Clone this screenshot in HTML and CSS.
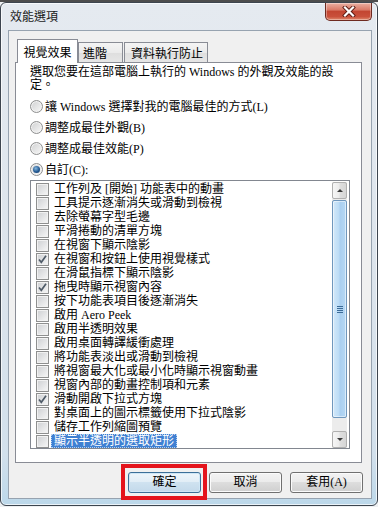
FILE: index.html
```html
<!DOCTYPE html>
<html lang="zh-Hant">
<head>
<meta charset="utf-8">
<title>效能選項</title>
<link rel="stylesheet" href="styles.css">
</head>
<body>
<div class="behind"></div>
<div class="window">
  <div class="titlebar">
    <div class="title">效能選項</div>
    <div class="close">
      <svg width="14" height="11" viewBox="0 0 14 11"><path d="M3 1.5 L11 9.5 M11 1.5 L3 9.5" stroke="#5a1a12" stroke-width="4" stroke-linecap="square" fill="none"/><path d="M3 1.5 L11 9.5 M11 1.5 L3 9.5" stroke="#ffffff" stroke-width="2.2" stroke-linecap="square" fill="none"/></svg>
    </div>
  </div>
  <div class="client">
    <div class="tabs">
      <div class="tab active">視覺效果</div>
      <div class="tab t2">進階</div>
      <div class="tab t3">資料執行防止</div>
    </div>
    <div class="panel">
      <div class="desc">選取您要在這部電腦上執行的 Windows 的外觀及效能的設<br>定。</div>
      <div class="radios">
        <div class="radio"><span class="rb"></span>讓 Windows 選擇對我的電腦最佳的方式(L)</div>
        <div class="radio"><span class="rb"></span>調整成最佳外觀(B)</div>
        <div class="radio"><span class="rb"></span>調整成最佳效能(P)</div>
        <div class="radio"><span class="rb on"></span>自訂(C):</div>
      </div>
      <div class="list">
        <div class="rows">
          <div class="row"><span class="cb"></span>工作列及 [開始] 功能表中的動畫</div>
          <div class="row"><span class="cb"></span>工具提示逐漸消失或滑動到檢視</div>
          <div class="row"><span class="cb"></span>去除螢幕字型毛邊</div>
          <div class="row"><span class="cb"></span>平滑捲動的清單方塊</div>
          <div class="row"><span class="cb"></span>在視窗下顯示陰影</div>
          <div class="row"><span class="cb"><svg width="11" height="11" viewBox="0 0 11 11"><path d="M2 5.5 L4.3 8.3 L9 1.8" stroke="#4f5b68" stroke-width="1.7" fill="none"/></svg></span>在視窗和按鈕上使用視覺樣式</div>
          <div class="row"><span class="cb"></span>在滑鼠指標下顯示陰影</div>
          <div class="row"><span class="cb"><svg width="11" height="11" viewBox="0 0 11 11"><path d="M2 5.5 L4.3 8.3 L9 1.8" stroke="#4f5b68" stroke-width="1.7" fill="none"/></svg></span>拖曳時顯示視窗內容</div>
          <div class="row"><span class="cb"></span>按下功能表項目後逐漸消失</div>
          <div class="row"><span class="cb"></span>啟用 Aero Peek</div>
          <div class="row"><span class="cb"></span>啟用半透明效果</div>
          <div class="row"><span class="cb"></span>啟用桌面轉譯緩衝處理</div>
          <div class="row"><span class="cb"></span>將功能表淡出或滑動到檢視</div>
          <div class="row"><span class="cb"></span>將視窗最大化或最小化時顯示視窗動畫</div>
          <div class="row"><span class="cb"></span>視窗內部的動畫控制項和元素</div>
          <div class="row"><span class="cb"><svg width="11" height="11" viewBox="0 0 11 11"><path d="M2 5.5 L4.3 8.3 L9 1.8" stroke="#4f5b68" stroke-width="1.7" fill="none"/></svg></span>滑動開啟下拉式方塊</div>
          <div class="row"><span class="cb"></span>對桌面上的圖示標籤使用下拉式陰影</div>
          <div class="row"><span class="cb"></span>儲存工作列縮圖預覽</div>
          <div class="row"><span class="cb"></span><span class="sel">顯示半透明的選取矩形</span></div>
        </div>
        <div class="sb">
          <div class="sbbtn"><span class="arr up"></span></div>
          <div class="thumb"><span class="grip"></span></div>
          <div class="track"></div>
          <div class="sbbtn"><span class="arr down"></span></div>
        </div>
      </div>
    </div>
    <div class="buttons">
      <div class="btn default">確定</div>
      <div class="btn">取消</div>
      <div class="btn">套用(A)</div>
    </div>
  </div>
</div>
<div class="mark"></div>
</body>
</html>
```
FILE: styles.css
```css
* { box-sizing: border-box; }
html, body { margin: 0; padding: 0; }
body {
  width: 378px;
  height: 507px;
  overflow: hidden;
  position: relative;
  background: #eef0f2;
  font-family: "Liberation Serif", "Noto Sans CJK TC", serif;
  font-size: 12px;
  color: #000;
}
.behind { height: 2px; background: #4d4d4d; }
.window {
  width: 378px;
  height: 504px;
  border: 1px solid #3d454f;
  border-radius: 6px;
  background: linear-gradient(#e5eaf0, #dce4ec 55%, #d2e0ec 90%, #bcd8ea);
  box-shadow: inset 0 0 0 1px rgba(255,255,255,0.7);
  padding: 0 5px 6px 7px;
  display: flex;
  flex-direction: column;
}
.titlebar { height: 27px; display: flex; align-items: flex-start; flex: none; }
.title {
  margin: 6px 0 0 2px;
  font-family: "Noto Sans CJK TC", sans-serif;
  font-size: 12px;
  line-height: 14px;
  color: #1b1b1b;
}
.close {
  margin-left: auto;
  width: 47px;
  height: 18px;
  border: 1px solid #6e2a20;
  border-top: none;
  border-radius: 0 0 5px 5px;
  background: linear-gradient(#eab0a3, #d97a68 40%, #c34632 50%, #c9503b 80%, #e08a6e);
  box-shadow: inset 0 0 0 1px rgba(255,255,255,0.35);
  display: flex;
  align-items: center;
  justify-content: center;
}
.client {
  height: 469px;
  background: #f0f0f0;
  border: 1px solid #97a3b0;
  display: flex;
  flex-direction: column;
  flex: none;
}
.tabs {
  display: flex;
  align-items: flex-end;
  height: 24px;
  margin: 8px 0 -1px 8px;
  position: relative;
  z-index: 1;
  font-family: "Noto Sans CJK TC", sans-serif;
}
.tab {
  height: 21px;
  border: 1px solid #898c95;
  background: linear-gradient(#f4f4f4, #ebebeb 50%, #dedede 51%, #e6e6e6);
  line-height: 19px;
  font-size: 12px;
  color: #000;
}
.tab.active {
  width: 61px;
  height: 24px;
  border-bottom: none;
  background: #fff;
  text-align: center;
  line-height: 23px;
}
.tab.t2 { width: 45px; padding-left: 4px; }
.tab.t3 { width: 84px; padding-left: 6px; margin-left: 1px; }
.panel {
  margin-left: 6px;
  width: 347px;
  height: 401px;
  border: 1px solid #898c95;
  background: #fff;
  padding: 3px 0 0 14px;
  flex: none;
}
.desc { line-height: 13px; white-space: nowrap; }
.radios { margin-top: 4px; }
.radio { height: 21px; display: flex; align-items: center; white-space: nowrap; line-height: 14px; }
.rb {
  width: 13px;
  height: 13px;
  border-radius: 50%;
  border: 1px solid #8e8f8f;
  background: linear-gradient(135deg, #cfd0d1, #f8f8f8);
  box-shadow: inset 0 0 0 1px #f3f3f3;
  margin-right: 2px;
  flex: none;
  display: flex;
  align-items: center;
  justify-content: center;
}
.rb.on::after {
  content: "";
  width: 7px;
  height: 7px;
  border-radius: 50%;
  background: radial-gradient(circle at 40% 35%, #86b8e0, #245a92 55%, #0e3262);
}
.list {
  width: 320px;
  height: 269px;
  border: 1px solid #828790;
  padding: 1px 2px 0 1px;
  display: flex;
}
.rows { flex: 1; }
.row {
  height: 14px;
  display: flex;
  align-items: center;
  padding-left: 4px;
  white-space: nowrap;
  line-height: 14px;
}
.cb {
  width: 13px;
  height: 13px;
  border: 1px solid #8e8f8f;
  background: linear-gradient(135deg, #cdcfd2, #f7f7f7);
  box-shadow: inset 0 0 0 1px #f1f1f1;
  margin-right: 5px;
  flex: none;
  display: flex;
  align-items: center;
  justify-content: center;
}
.sel {
  background: #3f80d2;
  color: #fff;
  height: 14px;
  margin-left: -3px;
  padding: 0 3px;
  outline: 1px dotted #b9d2f0;
  outline-offset: -1px;
}
.sb {
  width: 15px;
  display: flex;
  flex-direction: column;
  background: #ececec;
  height: 266px;
}
.sbbtn {
  height: 17px;
  border: 1px solid #b0b0b0;
  border-radius: 2px;
  background: linear-gradient(90deg, #f6f6f6, #ececec 45%, #dedede 55%, #d6d6d6);
  display: flex;
  align-items: center;
  justify-content: center;
  flex: none;
}
.arr { width: 0; height: 0; border-left: 3px solid transparent; border-right: 3px solid transparent; }
.arr.up { border-bottom: 3px solid #3a3a3a; }
.arr.down { border-top: 3px solid #3a3a3a; }
.thumb {
  margin-top: 1px;
  height: 218px;
  border: 1px solid #6f97bd;
  border-radius: 2px;
  background: linear-gradient(90deg, #d2e8f9, #bcdcf6 45%, #a9cff1 55%, #b6d8f4);
  box-shadow: inset 0 0 0 1px rgba(255,255,255,0.5);
  display: flex;
  align-items: center;
  justify-content: center;
  flex: none;
}
.grip {
  width: 6px;
  height: 7px;
  background: repeating-linear-gradient(#3c6c99 0 1px, transparent 1px 2px);
}
.track { flex: 1; }
.buttons {
  display: flex;
  justify-content: flex-end;
  gap: 8px;
  margin-top: 9px;
  padding-right: 8px;
}
.btn {
  width: 73px;
  height: 21px;
  border: 1px solid #707070;
  border-radius: 3px;
  background: linear-gradient(#f3f3f3, #ebebeb 48%, #dddddd 50%, #cfcfcf);
  box-shadow: inset 0 0 0 1px #fbfbfb;
  text-align: center;
  line-height: 19px;
  font-size: 12px;
}
.btn.default {
  border-color: #3c6f98;
  background: linear-gradient(#eef5fa, #e1edf6 48%, #cfe2f0 50%, #c3d9ea);
  box-shadow: inset 0 0 0 1px #cfe6f5;
}
.mark {
  position: absolute;
  left: 121px;
  top: 464px;
  width: 86px;
  height: 36px;
  border: 4px solid #e4141c;
}
```
